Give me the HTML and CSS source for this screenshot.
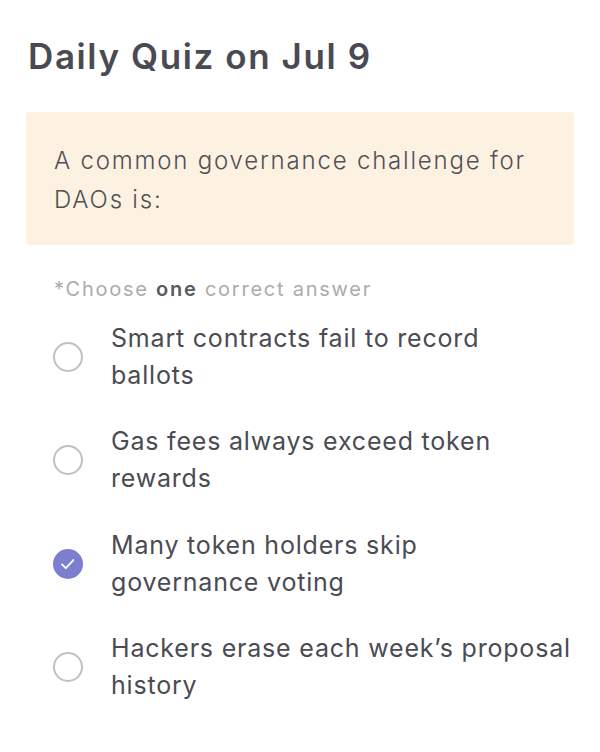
FILE: index.html
```html
<!DOCTYPE html>
<html>
<head>
<meta charset="utf-8">
<link rel="stylesheet" href="styles.css">
</head>
<body>
<main class="quiz">
  <h1 class="title">Daily Quiz on Jul 9</h1>
  <div class="question">A common governance challenge for DAOs is:</div>
  <p class="hint">*Choose <b>one</b> correct answer</p>
  <ul class="options">
    <li class="option"><span class="radio"></span><span class="label">Smart contracts fail to record<br>ballots</span></li>
    <li class="option"><span class="radio"></span><span class="label">Gas fees always exceed token rewards</span></li>
    <li class="option"><span class="radio checked"><svg viewBox="0 0 30 30" width="30" height="30"><path d="M9 15.4l3.8 3.7 7.6-8" fill="none" stroke="#fff" stroke-width="1.9" stroke-linecap="round" stroke-linejoin="round"/></svg></span><span class="label">Many token holders skip governance voting</span></li>
    <li class="option"><span class="radio"></span><span class="label">Hackers erase each week’s proposal history</span></li>
  </ul>
</main>
</body>
</html>
```
FILE: styles.css
```css
html, body {
  margin: 0;
  padding: 0;
  background: #ffffff;
}
body {
  font-family: Inter, "Noto Sans", sans-serif;
  color: #4b4b53;
}
.quiz {
  padding: 34px 26px 0 26px;
}
.title {
  margin: 0 0 0 2px;
  font-size: 35px;
  font-weight: 600;
  line-height: 44px;
  color: #4a4a52;
  letter-spacing: 1.6px;
}
.question {
  margin-top: 34px;
  background: #fdf2e2;
  border-radius: 4px;
  padding: 29px 28px 26px 28px;
  font-size: 24px;
  font-weight: 300;
  line-height: 39px;
  letter-spacing: 1.8px;
  color: #505055;
}
.hint {
  margin: 31px 0 0 28px;
  font-size: 20px;
  line-height: 26px;
  letter-spacing: 1.75px;
  color: #ababab;
}
.hint b {
  font-weight: 600;
  color: #5a5a5f;
}
.options {
  list-style: none;
  margin: 17.5px 0 0 0;
  padding: 0 2px 0 0;
  display: flex;
  flex-direction: column;
  gap: 29.5px;
}
.option {
  display: flex;
  align-items: center;
  gap: 28px;
  padding-left: 27px;
}
.radio {
  flex: none;
  width: 30px;
  height: 30px;
  box-sizing: border-box;
  border: 2px solid #c0c0c0;
  border-radius: 50%;
  display: flex;
  align-items: center;
  justify-content: center;
}
.radio.checked {
  border: none;
  background: #7c7fd0;
}
.label {
  font-size: 25px;
  line-height: 37px;
  font-weight: 400;
  color: #4b4b53;
  letter-spacing: 0.8px;
}
```
